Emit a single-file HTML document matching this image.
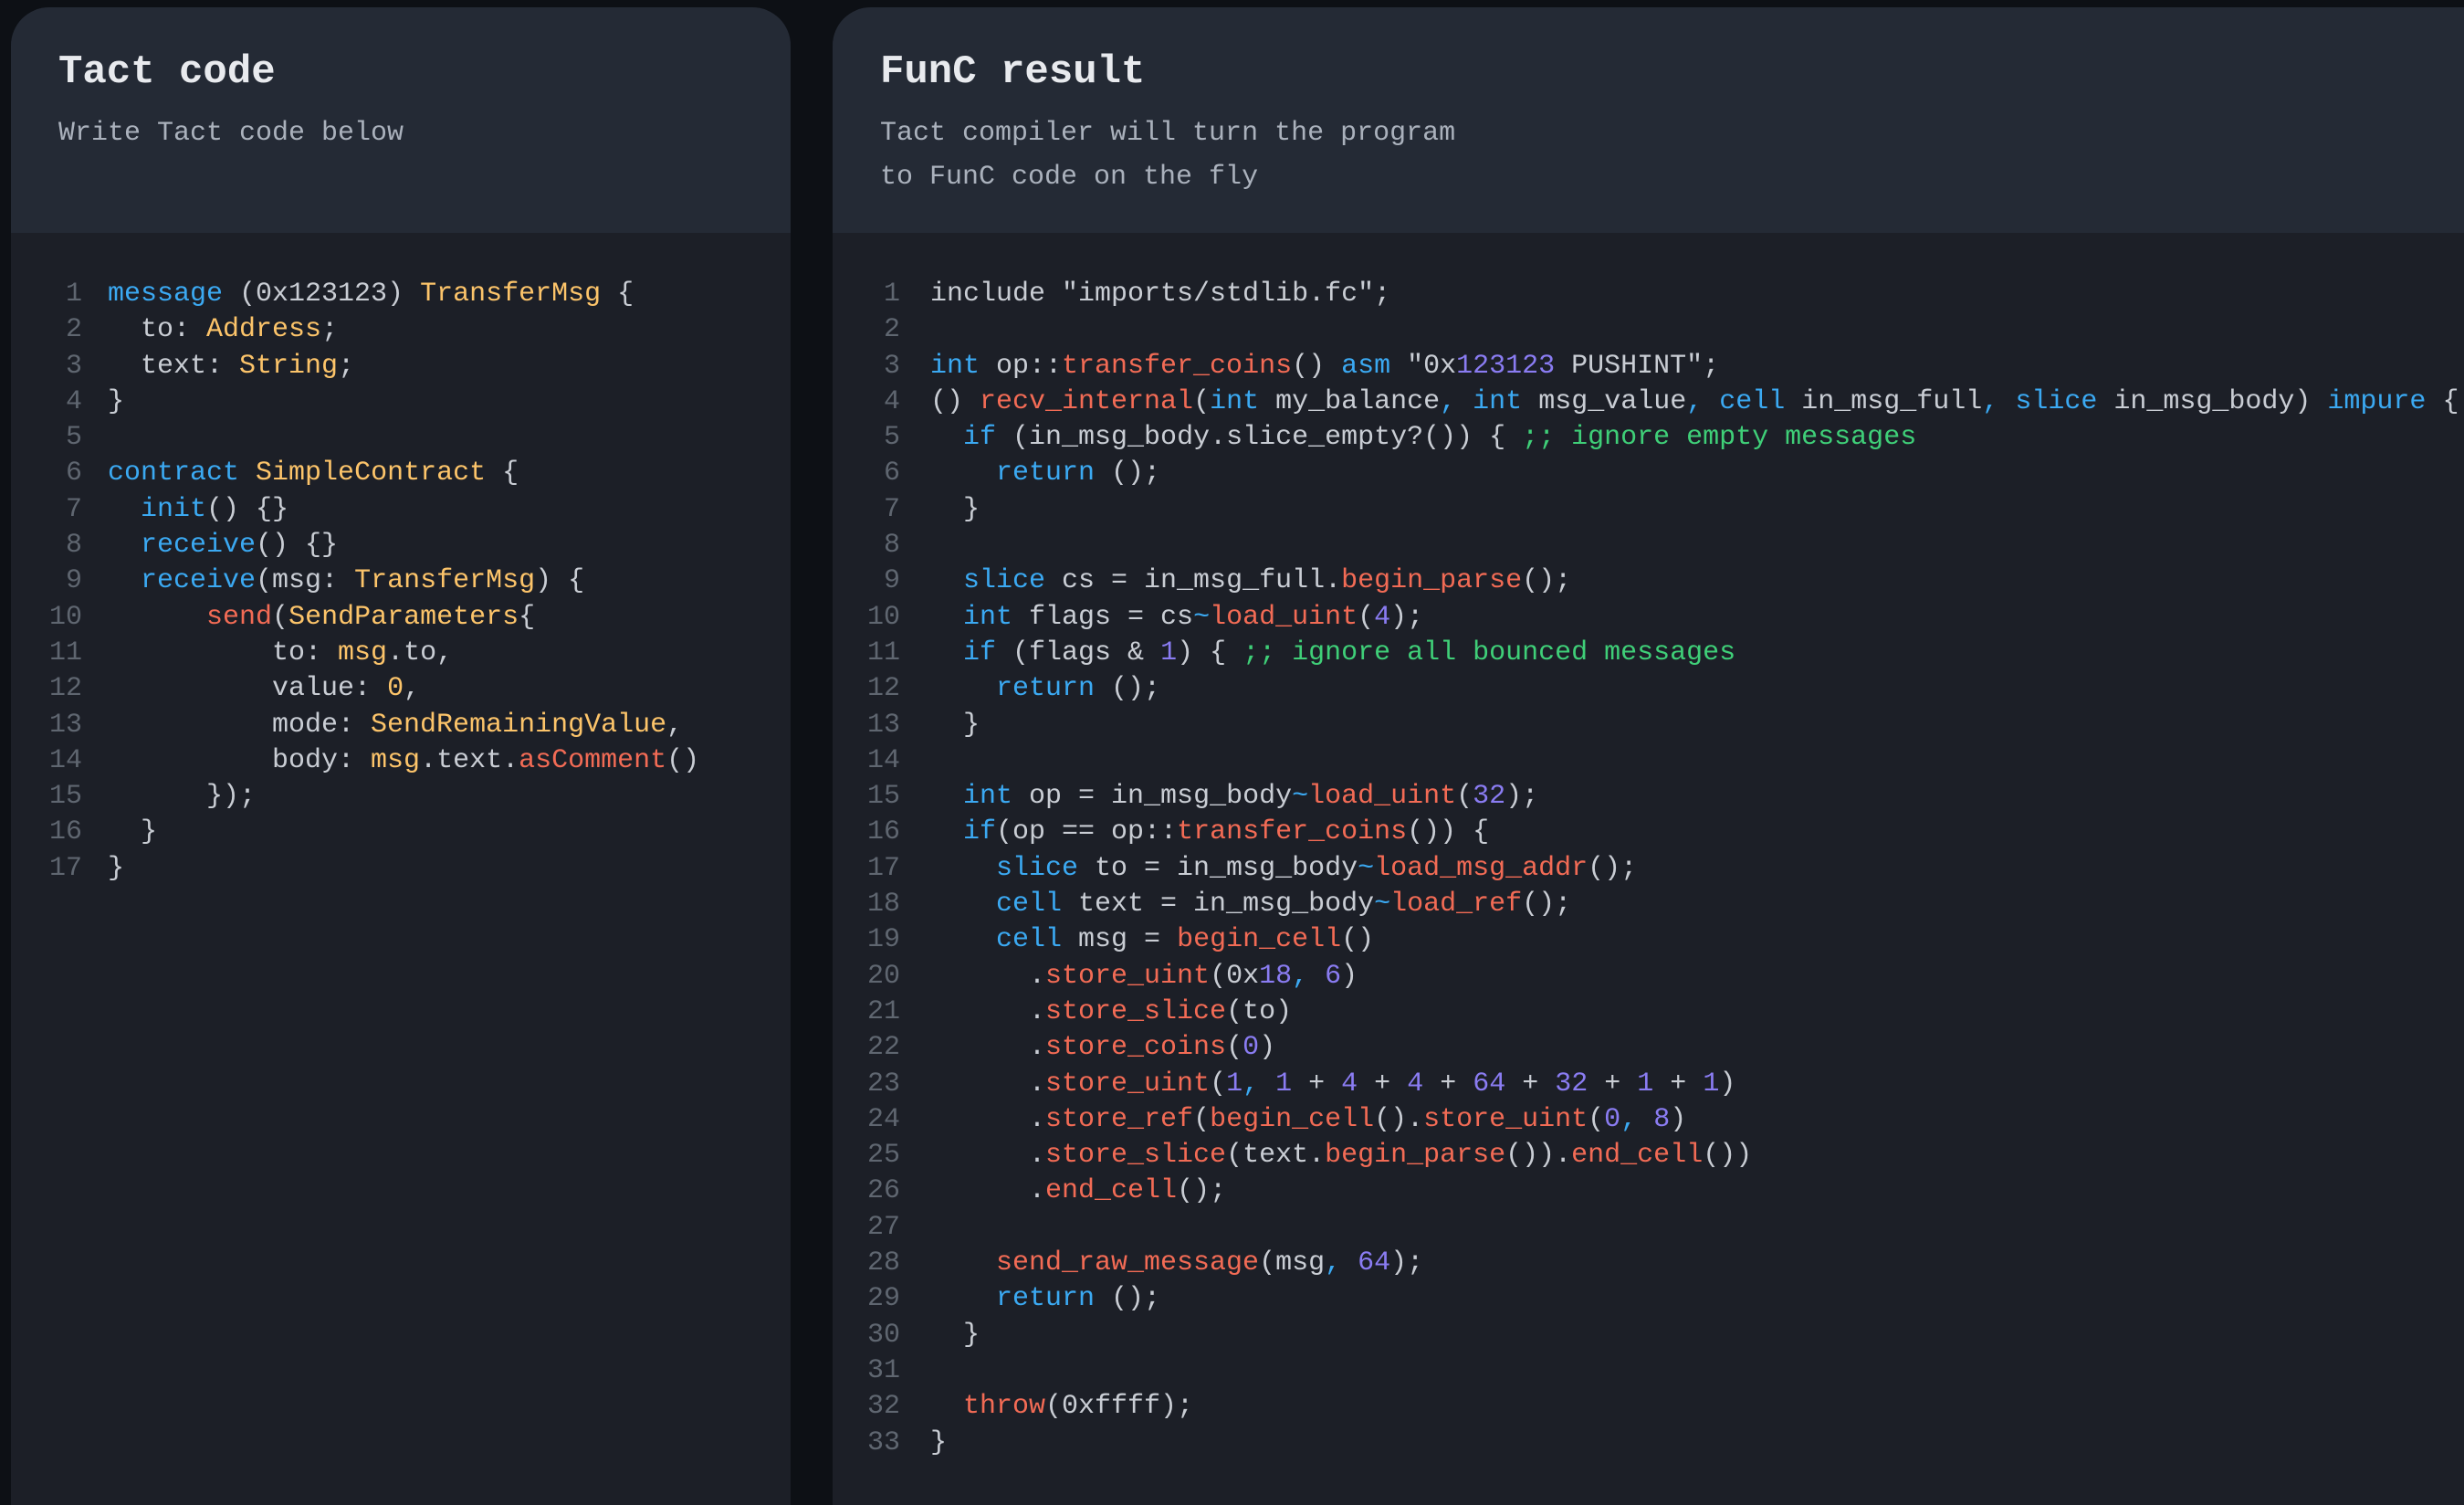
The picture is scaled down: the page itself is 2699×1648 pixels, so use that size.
<!DOCTYPE html>
<html><head><meta charset="utf-8"><style>
body{margin:0;width:2699px;height:1611px;background:#0d1015;overflow:hidden;font-family:"Liberation Mono",monospace;position:relative}
.p{position:absolute;top:8px;height:1640px;background:#1c1f27;border-radius:42px 42px 0 0;overflow:hidden}
.h{height:247px;background:#242a35;padding:0 0 0 54px;box-sizing:border-box}
.t{position:absolute;top:46px;font-size:44px;font-weight:bold;color:#e8eaee}
.s{position:absolute;top:114px;font-size:30px;line-height:48px;color:#aab1bc;white-space:pre}
.c{position:absolute;top:295px;font-size:30px;line-height:39.3px;white-space:pre;color:#c9cdd4}
.n{position:absolute;top:295px;font-size:30px;line-height:39.3px;white-space:pre;color:#5f6670;text-align:right}
.k{color:#3ba9f2}.y{color:#fcc46a}.f{color:#f26b55}.m{color:#8a7cf2}.g{color:#3fcf78}
</style></head><body>
<div class="p" style="left:12px;width:854px">
<div class="h"></div>
<div class="t" style="left:52px">Tact code</div>
<div class="s" style="left:52px">Write Tact code below</div>
<div class="n" style="left:14px;width:64px">1
2
3
4
5
6
7
8
9
10
11
12
13
14
15
16
17</div>
<div class="c" style="left:106px"><span class="k">message</span> (0x123123) <span class="y">TransferMsg</span> {
  to: <span class="y">Address</span>;
  text: <span class="y">String</span>;
}

<span class="k">contract</span> <span class="y">SimpleContract</span> {
  <span class="k">init</span>() {}
  <span class="k">receive</span>() {}
  <span class="k">receive</span>(msg: <span class="y">TransferMsg</span>) {
      <span class="f">send</span>(<span class="y">SendParameters</span>{
          to: <span class="y">msg</span>.to,
          value: <span class="y">0</span>,
          mode: <span class="y">SendRemainingValue</span>,
          body: <span class="y">msg</span>.text.<span class="f">asComment</span>()
      });
  }
}</div>
</div>
<div class="p" style="left:912px;width:1900px">
<div class="h"></div>
<div class="t" style="left:52px">FunC result</div>
<div class="s" style="left:52px">Tact compiler will turn the program
to FunC code on the fly</div>
<div class="n" style="left:12px;width:62px">1
2
3
4
5
6
7
8
9
10
11
12
13
14
15
16
17
18
19
20
21
22
23
24
25
26
27
28
29
30
31
32
33</div>
<div class="c" style="left:107px">include "imports/stdlib.fc";

<span class="k">int</span> op::<span class="f">transfer_coins</span>() <span class="k">asm</span> "0x<span class="m">123123</span> PUSHINT";
() <span class="f">recv_internal</span>(<span class="k">int</span> my_balance<span class="k">,</span> <span class="k">int</span> msg_value<span class="k">,</span> <span class="k">cell</span> in_msg_full<span class="k">,</span> <span class="k">slice</span> in_msg_body) <span class="k">impure</span> {
  <span class="k">if</span> (in_msg_body.slice_empty?()) { <span class="g">;; ignore empty messages</span>
    <span class="k">return</span> ();
  }

  <span class="k">slice</span> cs = in_msg_full.<span class="f">begin_parse</span>();
  <span class="k">int</span> flags = cs<span class="k">~</span><span class="f">load_uint</span>(<span class="m">4</span>);
  <span class="k">if</span> (flags &amp; <span class="m">1</span>) { <span class="g">;; ignore all bounced messages</span>
    <span class="k">return</span> ();
  }

  <span class="k">int</span> op = in_msg_body<span class="k">~</span><span class="f">load_uint</span>(<span class="m">32</span>);
  <span class="k">if</span>(op == op::<span class="f">transfer_coins</span>()) {
    <span class="k">slice</span> to = in_msg_body<span class="k">~</span><span class="f">load_msg_addr</span>();
    <span class="k">cell</span> text = in_msg_body<span class="k">~</span><span class="f">load_ref</span>();
    <span class="k">cell</span> msg = <span class="f">begin_cell</span>()
      .<span class="f">store_uint</span>(0x<span class="m">18</span><span class="k">,</span> <span class="m">6</span>)
      .<span class="f">store_slice</span>(to)
      .<span class="f">store_coins</span>(<span class="m">0</span>)
      .<span class="f">store_uint</span>(<span class="m">1</span><span class="k">,</span> <span class="m">1</span> + <span class="m">4</span> + <span class="m">4</span> + <span class="m">64</span> + <span class="m">32</span> + <span class="m">1</span> + <span class="m">1</span>)
      .<span class="f">store_ref</span>(<span class="f">begin_cell</span>().<span class="f">store_uint</span>(<span class="m">0</span><span class="k">,</span> <span class="m">8</span>)
      .<span class="f">store_slice</span>(text.<span class="f">begin_parse</span>()).<span class="f">end_cell</span>())
      .<span class="f">end_cell</span>();

    <span class="f">send_raw_message</span>(msg<span class="k">,</span> <span class="m">64</span>);
    <span class="k">return</span> ();
  }

  <span class="f">throw</span>(0xffff);
}</div>
</div>
</body></html>
